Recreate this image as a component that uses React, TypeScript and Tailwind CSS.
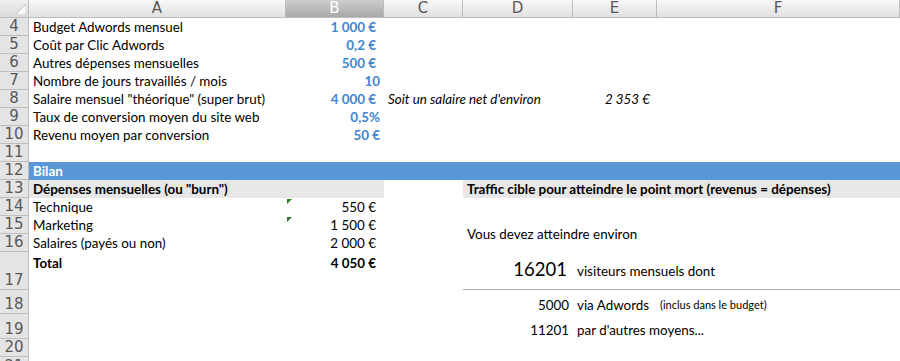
import React from "react";

const RH = ({ n, last }: { n?: number; last?: boolean }) => (
  <div
    className={`w-[29px] shrink-0 self-stretch flex items-end justify-center bg-[#e4e4e4] border-r border-[#bdbdbd] ${last ? "" : "border-b"} text-[#585858] text-[15px] leading-[17px] font-['DejaVu_Sans',sans-serif]`}
  >
    {n}
  </div>
);

const Tri = () => (
  <span className="absolute left-[1px] top-[1px] w-0 h-0 border-t-[5px] border-t-[#2c7a2c] border-r-[5px] border-r-transparent" />
);

const ColHead = ({ w, label, sel }: { w: string; label: string; sel?: boolean }) => (
  <div
    className={`${w} shrink-0 h-full flex items-center justify-center border-r border-b border-[#bcbcbc] text-[15px] leading-none font-['DejaVu_Sans',sans-serif] ${sel ? "bg-linear-to-b from-[#cdcdcd] to-[#a9a9a9] text-white" : "bg-linear-to-b from-[#f8f8f8] to-[#e1e1e1] text-[#585858]"}`}
  >
    {label}
  </div>
);

const blue = "text-[#3f86cf] font-bold";

const InputRow = ({ n, label, value, pr = "pr-[8px]" }: { n: number; label: string; value: string; pr?: string }) => (
  <div className="flex h-[18px]">
    <RH n={n} />
    <div className="w-[257px] shrink-0 pl-[4px] leading-[18px] whitespace-nowrap">{label}</div>
    <div className={`w-[98px] shrink-0 text-right ${pr} leading-[18px] ${blue}`}>{value}</div>
  </div>
);

export default function App() {
  return (
    <div className="w-[900px] h-[361px] overflow-hidden bg-white text-[13.4px] text-black font-['Lato','Open_Sans',sans-serif]">
      {/* column headers */}
      <div className="flex h-[18px]">
        <div className="w-[29px] shrink-0 h-full relative bg-linear-to-b from-[#eeeeee] to-[#dadada] border-r border-b border-[#bcbcbc]">
          <svg className="absolute right-[2px] bottom-[2px]" width="11" height="11" viewBox="0 0 11 11">
            <polygon points="11,0 11,11 0,11" fill="#fafafa" stroke="#c4c4c4" strokeWidth="1" />
          </svg>
        </div>
        <ColHead w="w-[257px]" label="A" />
        <ColHead w="w-[98px]" label="B" sel />
        <ColHead w="w-[79px]" label="C" />
        <ColHead w="w-[110px]" label="D" />
        <ColHead w="w-[84px]" label="E" />
        <ColHead w="w-[243px]" label="F" />
      </div>

      <InputRow n={4} label="Budget Adwords mensuel" value="1 000 €" />
      <InputRow n={5} label="Coût par Clic Adwords" value="0,2 €" />
      <InputRow n={6} label="Autres dépenses mensuelles" value="500 €" />
      <InputRow n={7} label="Nombre de jours travaillés / mois" value="10" pr="pr-[4px]" />

      {/* row 8 */}
      <div className="flex h-[18px]">
        <RH n={8} />
        <div className="w-[257px] shrink-0 pl-[4px] leading-[18px] whitespace-nowrap">Salaire mensuel "théorique" (super brut)</div>
        <div className={`w-[98px] shrink-0 text-right pr-[8px] leading-[18px] ${blue}`}>4 000 €</div>
        <div className="w-[79px] shrink-0 pl-[4px] leading-[18px] italic whitespace-nowrap">Soit un salaire net d'environ</div>
        <div className="w-[110px] shrink-0" />
        <div className="w-[84px] shrink-0 text-right pr-[7px] leading-[18px] italic whitespace-nowrap">2 353 €</div>
      </div>

      <InputRow n={9} label="Taux de conversion moyen du site web" value="0,5%" pr="pr-[4px]" />
      <InputRow n={10} label="Revenu moyen par conversion" value="50 €" pr="pr-[4px]" />

      {/* row 11 */}
      <div className="flex h-[18px]">
        <RH n={11} />
      </div>

      {/* row 12 */}
      <div className="flex h-[18px]">
        <RH n={12} />
        <div className="flex-1 bg-[#5a97d6] text-white font-bold pl-[4px] leading-[18px]">Bilan</div>
      </div>

      {/* row 13 */}
      <div className="flex h-[18px]">
        <RH n={13} />
        <div className="w-[355px] shrink-0 bg-[#e7e7e7] pl-[4px] leading-[18px] font-bold whitespace-nowrap">Dépenses mensuelles (ou "burn")</div>
        <div className="w-[79px] shrink-0" />
        <div className="flex-1 bg-[#e7e7e7] pl-[4px] leading-[18px] font-bold whitespace-nowrap">Traffic cible pour atteindre le point mort (revenus = dépenses)</div>
      </div>

      {/* row 14 */}
      <div className="flex h-[18px]">
        <RH n={14} />
        <div className="w-[257px] shrink-0 pl-[4px] leading-[18px]">Technique</div>
        <div className="w-[98px] shrink-0 relative text-right pr-[8px] leading-[18px]">
          <Tri />
          550 €
        </div>
      </div>

      {/* row 15 */}
      <div className="flex h-[18px]">
        <RH n={15} />
        <div className="w-[257px] shrink-0 pl-[4px] leading-[18px]">Marketing</div>
        <div className="w-[98px] shrink-0 relative text-right pr-[8px] leading-[18px]">
          <Tri />
          1 500 €
        </div>
        <div className="w-[79px] shrink-0" />
        <div className="flex-1 pl-[4px] pt-[9px] leading-[18px] whitespace-nowrap">Vous devez atteindre environ</div>
      </div>

      {/* row 16 */}
      <div className="flex h-[18px]">
        <RH n={16} />
        <div className="w-[257px] shrink-0 pl-[4px] leading-[18px]">Salaires (payés ou non)</div>
        <div className="w-[98px] shrink-0 text-right pr-[8px] leading-[18px]">2 000 €</div>
      </div>

      {/* row 17 */}
      <div className="flex h-[38px]">
        <RH n={17} />
        <div className="w-[257px] shrink-0 pl-[4px] pt-[2px] leading-[18px] font-bold">Total</div>
        <div className="w-[98px] shrink-0 text-right pr-[8px] pt-[2px] leading-[18px] font-bold">4 050 €</div>
        <div className="w-[79px] shrink-0" />
        <div className="flex-1 flex items-baseline pt-[5px] border-b border-[#a8a8a8]">
          <div className="w-[110px] shrink-0 text-right pr-[6px] text-[18.5px] leading-[24px]">16201</div>
          <div className="pl-[4px] whitespace-nowrap leading-[18px]">visiteurs mensuels dont</div>
        </div>
      </div>

      {/* row 18 */}
      <div className="flex h-[24px]">
        <RH n={18} />
        <div className="w-[434px] shrink-0" />
        <div className="w-[110px] shrink-0 self-end text-right pr-[4px] leading-[18px]">5000</div>
        <div className="w-[84px] shrink-0 self-end pl-[4px] leading-[18px] whitespace-nowrap">via Adwords</div>
        <div className="flex-1 self-end pl-[3px] leading-[18px] text-[11px] whitespace-nowrap">(inclus dans le budget)</div>
      </div>

      {/* row 19 */}
      <div className="flex h-[25px]">
        <RH n={19} />
        <div className="w-[434px] shrink-0" />
        <div className="w-[110px] shrink-0 self-end text-right pr-[4px] leading-[18px]">11201</div>
        <div className="w-[84px] shrink-0 self-end pl-[4px] leading-[18px] whitespace-nowrap">par d'autres moyens...</div>
      </div>

      {/* row 20 */}
      <div className="flex h-[18px]">
        <RH n={20} />
      </div>

      {/* row 21 */}
      <div className="flex h-[18px]">
        <RH n={21} last />
      </div>
    </div>
  );
}
